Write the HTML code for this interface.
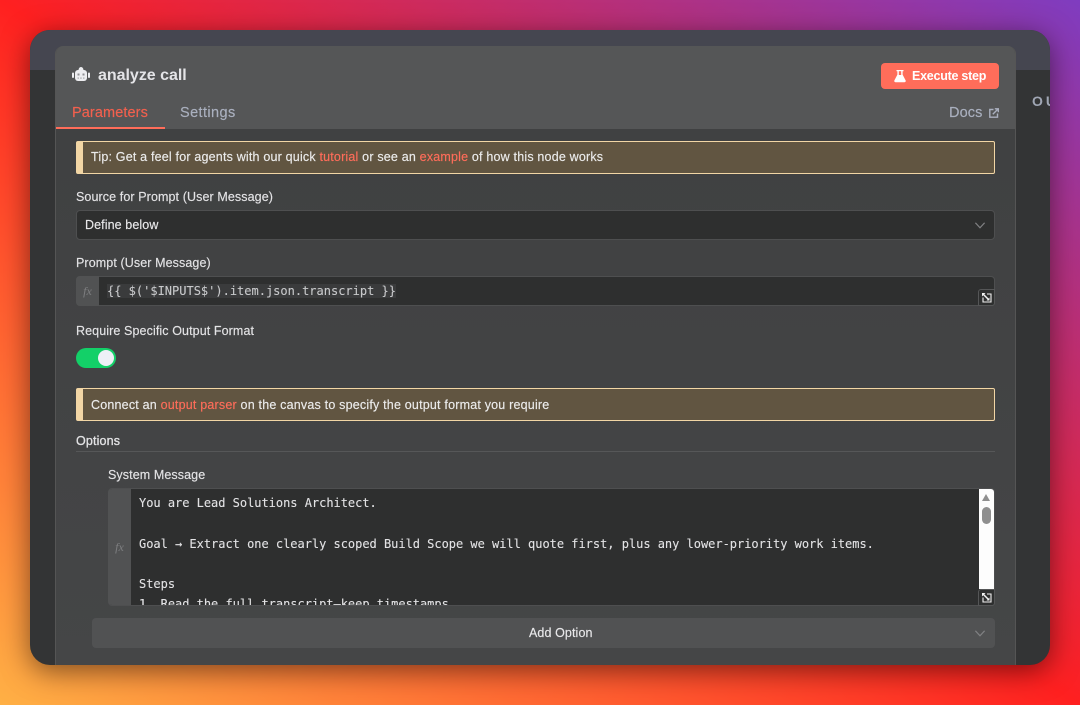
<!DOCTYPE html>
<html><head><meta charset="utf-8">
<style>
*{box-sizing:border-box;margin:0;padding:0}
html,body{width:1080px;height:705px;overflow:hidden}
body{position:relative;background:linear-gradient(to top right,#ffb045 0%,#ff2020 50%,#7f3cc0 100%);font-family:"Liberation Sans",sans-serif;color:#e8e8ea}
.a{position:absolute;white-space:nowrap}
.win{position:absolute;left:30px;top:30px;width:1020px;height:635px;border-radius:20px;background:#333435;overflow:hidden;box-shadow:0 6px 28px rgba(0,0,0,.5)}
.shadow{position:absolute;left:30px;top:30px;width:1020px;height:635px;border-radius:20px;box-shadow:0 6px 28px rgba(0,0,0,.5)}
.strip{position:absolute;left:0;top:0;width:1020px;height:40px;background:#454650}
.panel{position:absolute;left:25px;top:16px;width:961px;height:619px;border-radius:8px 8px 0 0;background:linear-gradient(#3f4041,#454647);border-left:1px solid #555;border-right:1px solid #555;overflow:hidden}
.head{position:absolute;left:0;top:0;width:961px;height:83px;background:#555657}
.lbl{font-size:12.5px;line-height:16px;color:#e3e3e5;letter-spacing:.1px;-webkit-text-stroke:.15px #e3e3e5}
.note{position:absolute;left:76px;width:919px;height:33px;background:#615541;border:1px solid #f2d6a5;border-left:7px solid #f2d6a5;border-radius:2px;font-size:12.5px;line-height:31px;padding-left:8px;color:#ebebeb;white-space:nowrap;letter-spacing:.19px;-webkit-text-stroke:.15px #ebebeb}
.note b{font-weight:400;color:#ff6d5a;-webkit-text-stroke:.15px #ff6d5a}
.input{position:absolute;background:#2e2f2f;border:1px solid #4e4f50;border-radius:4px}
.fx{position:absolute;background:#515253;color:#7e7f81;font:italic 12px "Liberation Serif",serif;text-align:center;border-radius:4px 0 0 4px}
.mono{font-family:"DejaVu Sans Mono","Liberation Mono",monospace;font-size:12px;letter-spacing:-.02px;color:#e3e3e5;white-space:pre;-webkit-text-stroke:.1px #e3e3e5}
.rz{position:absolute;width:17px;height:17px;background:#2e2f2f;border:1px solid #555657;border-radius:3px 0 3px 0}
</style></head>
<body>
<div class="win">
  <div class="strip"></div>
  <div class="a" style="left:1002px;top:63px;font-size:14px;font-weight:700;color:#a0a6b4;letter-spacing:3px">OU</div>
  <div class="panel">
    <div class="head"></div>
  </div>
</div>

<svg class="a" style="left:71px;top:66px" width="20" height="16" viewBox="0 0 20 16"><path d="M7.500 4.500C7.500 2.500 8.500 1 10 1s2.500 1.500 2.500 3.500z" fill="#ededf0"/><rect x="4" y="4" width="12" height="11" rx="3" fill="#ededf0"/><rect x="1" y="6.500" width="2" height="5.500" rx="1" fill="#ededf0"/><rect x="17" y="6.500" width="2" height="5.500" rx="1" fill="#ededf0"/><rect x="6.500" y="7.500" width="2" height="2" fill="#8f9093"/><rect x="11.500" y="7.500" width="2" height="2" fill="#8f9093"/><rect x="6.500" y="11.500" width="1.500" height="1.200" fill="#a9aaad"/><rect x="9.200" y="11.500" width="1.500" height="1.200" fill="#a9aaad"/><rect x="12" y="11.500" width="1.500" height="1.200" fill="#a9aaad"/></svg>
<div class="a" style="left:98px;top:66px;font-size:16px;line-height:19px;font-weight:700;color:#e4e4e7;letter-spacing:-.02px">analyze call</div>

<div class="a" style="left:881px;top:63px;width:118px;height:26px;background:#ff6d5a;border-radius:4px"></div>
<svg class="a" style="left:894px;top:69px" width="12" height="14" viewBox="0 0 12 14"><path d="M2.500 1h7v1.200H8.600v3.400l3 5.800c.5.900-.1 1.800-1 1.800H1.400c-.9 0-1.500-.9-1-1.800l3-5.800V2.200H2.500z" fill="#fff"/><path d="M4.800 2.200h2.400v3.800H4.800z" fill="#ff6d5a"/></svg>
<div class="a" style="left:912px;top:69px;font-size:12.500px;line-height:15px;font-weight:700;color:#fff;letter-spacing:-.25px">Execute step</div>

<div class="a" style="left:72px;top:104px;font-size:14.500px;line-height:18px;color:#f2604e;letter-spacing:.1px;-webkit-text-stroke:.15px #f2604e">Parameters</div>
<div class="a" style="left:56px;top:127px;width:109px;height:2px;background:#ff6d5a"></div>
<div class="a" style="left:180px;top:104px;font-size:14.500px;line-height:18px;color:#aab0bf;letter-spacing:.4px;-webkit-text-stroke:.15px #aab0bf">Settings</div>
<div class="a" style="left:949px;top:104px;font-size:14.500px;line-height:18px;color:#aab0bf;letter-spacing:.1px;-webkit-text-stroke:.15px #aab0bf">Docs</div>
<svg class="a" style="left:989px;top:108px" width="10" height="10" viewBox="0 0 10 10" fill="none" stroke="#aab0bf" stroke-width="1.400"><path d="M4.500 1.500H.8v7.700h7.700V5.500M3.800 6.200L9 1M5.800 .8H9.300V4.200"/></svg>

<div class="note" style="top:141px">Tip: Get a feel for agents with our quick <b>tutorial</b> or see an <b>example</b> of how this node works</div>

<div class="a lbl" style="left:76px;top:189px">Source for Prompt (User Message)</div>
<div class="input" style="left:76px;top:210px;width:919px;height:30px"></div>
<div class="a" style="left:85px;top:217px;font-size:12.500px;line-height:16px;color:#e8e8ea;letter-spacing:.1px;-webkit-text-stroke:.15px #e8e8ea">Define below</div>
<svg class="a" style="left:975px;top:222px" width="10" height="7" viewBox="0 0 10 7" fill="none" stroke="#808183" stroke-width="1.200"><path d="M.4 .8l4.600 5 4.600-5"/></svg>

<div class="a lbl" style="left:76px;top:255px">Prompt (User Message)</div>
<div class="input" style="left:76px;top:276px;width:919px;height:30px"></div>
<div class="fx" style="left:76px;top:276px;width:23px;height:30px;line-height:30px">fx</div>
<div class="a mono" style="left:107px;top:284px;line-height:14px;letter-spacing:0;color:#c8c9cb;background:#3a3b3c;-webkit-text-stroke:.1px #c8c9cb">{{ $('$INPUTS$').item.json.transcript }}</div>
<div class="rz" style="left:978px;top:289px"></div>
<svg class="a" style="left:981px;top:292px" width="11" height="11" viewBox="0 0 11 11" fill="none" stroke="#f2f2f2" stroke-width="1.100"><path d="M2 5.500V10H10V2H6"/><path d="M2 2L8 8" stroke-width="1.500"/><path d="M1 1h3.500L1 4.500z" fill="#f2f2f2" stroke="none"/><path d="M8.500 8.500V5.500L5.500 8.500z" fill="#f2f2f2" stroke="none"/></svg>

<div class="a lbl" style="left:76px;top:323px">Require Specific Output Format</div>
<div class="a" style="left:76px;top:348px;width:40px;height:20px;border-radius:10px;background:#13d068"></div>
<div class="a" style="left:98px;top:350px;width:16px;height:16px;border-radius:50%;background:#eef0f6"></div>

<div class="note" style="top:388px;line-height:33px;letter-spacing:.2px">Connect an <b>output parser</b> on the canvas to specify the output format you require</div>

<div class="a" style="left:76px;top:433px;font-size:12.500px;line-height:16px;font-weight:400;color:#e3e3e5;letter-spacing:.15px;-webkit-text-stroke:.3px #e3e3e5">Options</div>
<div class="a" style="left:76px;top:451px;width:919px;height:1px;background:#565758"></div>

<div class="a lbl" style="left:108px;top:467px">System Message</div>
<div class="input" style="left:108px;top:488px;width:887px;height:118px;overflow:hidden">
  <div class="mono" style="position:absolute;left:30px;top:4px;line-height:20.300px">You are Lead Solutions Architect.

Goal → Extract one clearly scoped Build Scope we will quote first, plus any lower-priority work items.

Steps
1. Read the full transcript—keep timestamps.</div>
  <div style="position:absolute;left:870px;top:0;width:15px;height:100px;background:#fdfdfd"></div>
  <div style="position:absolute;left:873px;top:5px;width:0;height:0;border-left:4.500px solid transparent;border-right:4.500px solid transparent;border-bottom:7px solid #8f8f8f"></div>
  <div style="position:absolute;left:873px;top:18px;width:9px;height:17px;border-radius:4.500px;background:#8f8f8f"></div>
</div>
<div class="fx" style="left:108px;top:489px;width:23px;height:116px;line-height:116px">fx</div>
<div class="rz" style="left:978px;top:589px"></div>
<svg class="a" style="left:981px;top:592px" width="11" height="11" viewBox="0 0 11 11" fill="none" stroke="#f2f2f2" stroke-width="1.100"><path d="M2 5.500V10H10V2H6"/><path d="M2 2L8 8" stroke-width="1.500"/><path d="M1 1h3.500L1 4.500z" fill="#f2f2f2" stroke="none"/><path d="M8.500 8.500V5.500L5.500 8.500z" fill="#f2f2f2" stroke="none"/></svg>

<div class="a" style="left:92px;top:618px;width:903px;height:30px;background:#515253;border-radius:4px"></div>
<div class="a" style="left:529px;top:625px;font-size:12.500px;line-height:16px;color:#e8e8ea;letter-spacing:.1px;-webkit-text-stroke:.15px #e8e8ea">Add Option</div>
<svg class="a" style="left:975px;top:630px" width="10" height="7" viewBox="0 0 10 7" fill="none" stroke="#808183" stroke-width="1.200"><path d="M.4 .8l4.600 5 4.600-5"/></svg>
</body></html>
